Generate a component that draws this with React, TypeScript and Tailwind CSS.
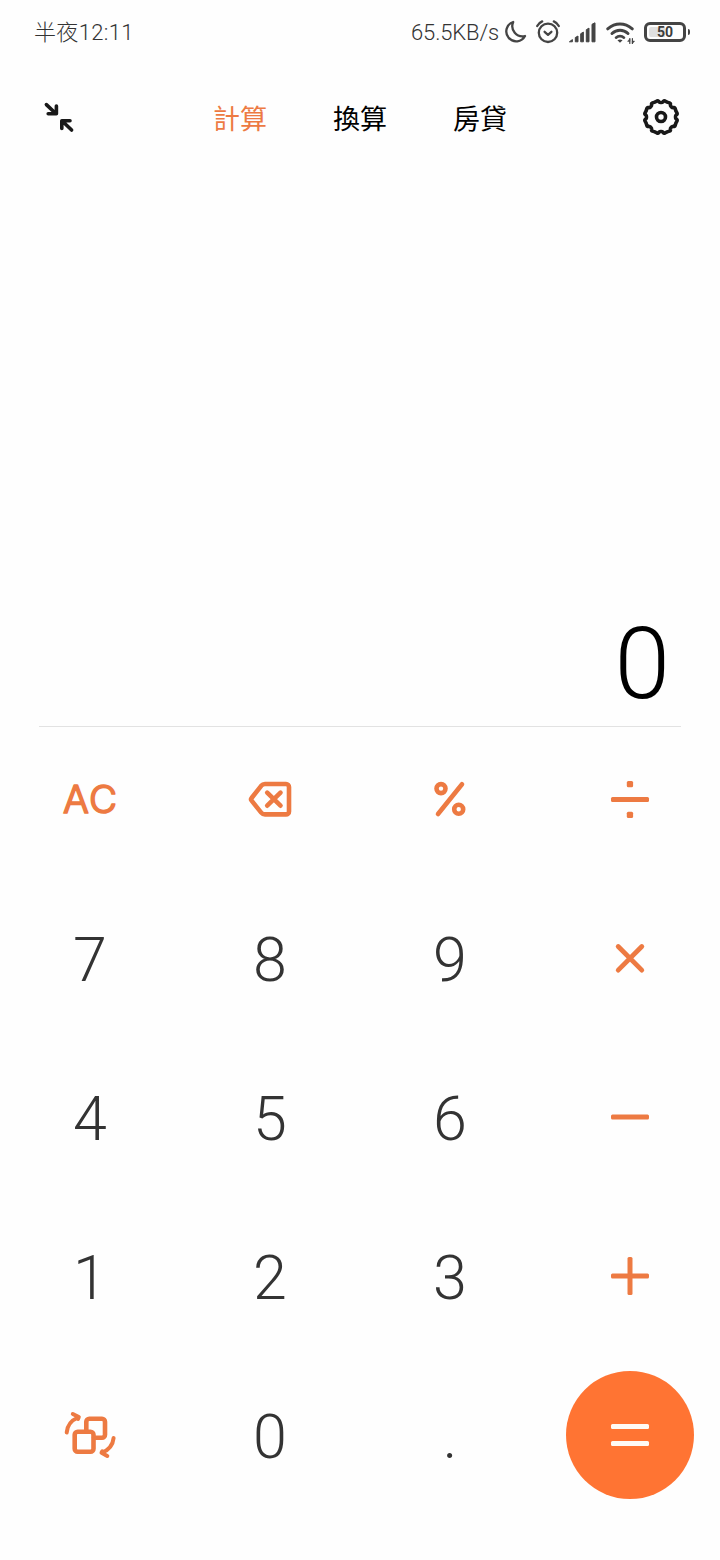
import type { ReactNode } from "react";
import { clsx } from "clsx";

const tabs = ["計算", "換算", "房貸"];

function Moon() {
    return (
        <svg width="24" height="26" viewBox="0 0 24 26" fill="none" stroke="#444" strokeWidth="2.3" strokeLinejoin="round">
            <path d="M9.2 3A9.9 9.9 0 1 0 21 17 10.2 10.2 0 0 1 9.2 3z" />
        </svg>
    );
}

function Alarm() {
    return (
        <svg width="26" height="26" viewBox="0 0 26 26" fill="none" stroke="#444" strokeWidth="2.3" strokeLinecap="round" strokeLinejoin="round">
            <circle cx="13" cy="13.8" r="9.2" />
            <path d="M9.6 12.8l3.4 3 3.4-3" />
            <path d="M2.2 7q1.6-3.2 5-4.6M23.8 7q-1.6-3.2-5-4.6" />
        </svg>
    );
}

function Signal() {
    return (
        <svg width="30" height="26" viewBox="0 0 30 26" fill="#444" stroke="#444" strokeWidth="1" strokeLinejoin="round">
            <path d="M1.4 22.8l3-2.2v2.200zM7.300 18.500l2.700-1.500v5.800H7.300zM12.700 14.700l2.700-1.600v9.700h-2.700zM18.300 10.700l2.700-1.600v13.700h-2.700zM24 5.300l3-1.500v19h-3z" />
        </svg>
    );
}

function Wifi() {
    return (
        <svg width="31" height="26" viewBox="0 0 31 26" fill="none" stroke="#444" strokeWidth="3" strokeLinecap="round">
            <path d="M2.7 9.8Q8.4 5 15 5t12.3 4.8" />
            <path d="M7 14.5q3.5-3.300 8-3.300t8 3.300" />
            <path d="M11 18.700q1.700-1.600 4-1.600t4 1.600" strokeWidth="2.6" />
            <path d="M12.400 21.300l2.600 2.500 2.600-2.500q-2.600-1.800-5.200 0z" fill="#444" stroke="none" />
            <path d="M24.8 19.500v5M27.4 19.500v5" strokeWidth="1.2" />
            <path d="M24.6 20l-2 2.400h2zM27.6 24.500l2-2.400h-2z" fill="#444" strokeWidth="0.5" />
        </svg>
    );
}

function Battery() {
    return (
        <div className="flex w-12 items-center pl-px">
            <div className="flex h-[20px] w-[42px] items-center rounded-[6px] border-3 border-solid border-[#444] p-[2px]">
                <div className="flex h-full w-full items-center justify-center rounded-[2px] bg-linear-to-r from-[#e0e0e0] from-50% to-[#fefefe] to-50% text-[14px] font-bold leading-none text-[#3c3c3c]">
                    50
                </div>
            </div>
            <div className="ml-[2px] h-1.5 w-[2px] rounded-r bg-[#444]" />
        </div>
    );
}

function Collapse() {
    return (
        <svg width="32" height="32" viewBox="0 0 32 32" fill="none" stroke="#191919" strokeWidth="3.6" strokeLinecap="round" strokeLinejoin="round">
            <path d="M3.4 3.6l8.8 8.4M5.200 12.800h8.200V5" />
            <path d="M28.600 29l-8.900-8.500M27 19.700h-8.200v7.800" />
        </svg>
    );
}

// eight broad teeth with a narrow notch between each pair
function gearPath() {
    const at = (r: number, deg: number) => {
        const a = (deg * Math.PI) / 180;
        return `${(20 + r * Math.sin(a)).toFixed(2)} ${(20 - r * Math.cos(a)).toFixed(2)}`;
    };
    let d = `M${at(14.5, 0)}`;
    for (let i = 0; i < 8; i++) {
        const a = i * 45;
        d += `Q${at(14.5, a + 5)} ${at(15.5, a + 8)}`;
        d += `Q${at(16.8, a + 9)} ${at(16.5, a + 14)}`;
        d += `L${at(16.1, a + 22.5)}L${at(16.5, a + 31)}`;
        d += `Q${at(16.8, a + 36)} ${at(15.5, a + 37)}`;
        d += `Q${at(14.5, a + 40)} ${at(14.5, a + 45)}`;
    }
    return d + "z";
}

function Gear() {
    return (
        <svg width="40" height="40" viewBox="0 0 40 40" fill="none" stroke="#191919" strokeWidth="3.6" strokeLinejoin="round">
            <path d={gearPath()} />
            <circle cx="20" cy="20" r="4.5" />
        </svg>
    );
}

function Glyph({ children }: { children: ReactNode }) {
    return (
        <svg
            className="block text-[#ed7a42]"
            width="60"
            height="60"
            viewBox="0 0 60 60"
            fill="none"
            stroke="currentColor"
            strokeWidth="4.6"
            strokeLinecap="round"
            strokeLinejoin="round"
        >
            {children}
        </svg>
    );
}

function Bar({ y = 27.5 }: { y?: number }) {
    return <rect x="11" y={y} width="38" height="5" rx="1.5" fill="currentColor" stroke="none" />;
}

function Key({ label, first, children }: { label?: string; first?: boolean; children?: ReactNode }) {
    return (
        <button className={clsx("flex items-center justify-center", first && "pb-2", children && !first && "pb-0.5")}>
            {children ?? <span className="pt-[3px] text-[61px] font-light leading-none text-[#333]">{label}</span>}
        </button>
    );
}

export default function App() {
    return (
        <div className="flex h-[1560px] w-[720px] flex-col bg-[#fefefe] font-['Roboto','Noto_Sans_CJK_TC',sans-serif]">
            <div className="flex h-16 items-center justify-between pl-[34px] pr-[29px] text-[22px] font-light text-[#333]">
                <span className="pt-px tracking-[0.35px]">半夜12:11</span>
                <div className="flex items-center gap-[7px]">
                    <span className="-mr-0.5 pt-px tracking-[-0.15px]">65.5KB/s</span>
                    <Moon />
                    <Alarm />
                    <Signal />
                    <Wifi />
                    <Battery />
                </div>
            </div>

            <div className="flex h-[106px] items-center justify-between pl-[43px] pr-[39px]">
                <Collapse />
                <div className="flex gap-[66px] pl-1 pt-1.5 text-[27px] leading-none text-black">
                    {tabs.map((tab, i) => (
                        <span key={tab} className={clsx(i === 0 && "text-[#ed7a42]")}>
                            {tab}
                        </span>
                    ))}
                </div>
                <Gear />
            </div>

            <div className="flex flex-1 items-end justify-end pb-3 pr-[50px] text-[100px] font-light leading-none text-black">
                0
            </div>
            <div className="mx-[39px] h-px shrink-0 bg-[#e2e2e2]" />

            <div className="grid grid-cols-4 grid-rows-[152px_159px_159px_159px_159px] pb-[45px]">
                <Key first>
                    <Glyph>
                        <text
                            x="30.7"
                            y="44.4"
                            textAnchor="middle"
                            fontFamily="Inter"
                            fontSize="38.5"
                            fontWeight="300"
                            letterSpacing="1.4"
                            fill="currentColor"
                            strokeWidth="1.7"
                        >
                            AC
                        </text>
                    </Glyph>
                </Key>
                <Key first>
                    <Glyph>
                        <path d="M25 15h21a3 3 0 0 1 3 3v24.4a3 3 0 0 1-3 3H25a5 5 0 0 1-3.8-1.8L11.6 31.6a2 2 0 0 1 0-2.6l9.6-12.2A5 5 0 0 1 25 15z" />
                        <path d="M27.2 23.7l13.3 13M40.5 23.7l-13.3 13" />
                    </Glyph>
                </Key>
                <Key first>
                    <Glyph>
                        <circle cx="21" cy="19.6" r="4.5" />
                        <circle cx="38.7" cy="40.3" r="4.5" />
                        <path d="M42 15.2L18 45" />
                    </Glyph>
                </Key>
                <Key first>
                    <Glyph>
                        <Bar y={28} />
                        <rect x="26.8" y="12" width="6.3" height="6.3" rx="1.5" fill="currentColor" stroke="none" />
                        <rect x="26.8" y="42.7" width="6.3" height="6.3" rx="1.5" fill="currentColor" stroke="none" />
                    </Glyph>
                </Key>

                <Key label="7" />
                <Key label="8" />
                <Key label="9" />
                <Key>
                    <Glyph>
                        <path d="M18.2 18.5L41.8 42.100M41.8 18.5L18.2 42.100" strokeWidth="4.8" />
                    </Glyph>
                </Key>

                <Key label="4" />
                <Key label="5" />
                <Key label="6" />
                <Key>
                    <Glyph>
                        <Bar />
                    </Glyph>
                </Key>

                <Key label="1" />
                <Key label="2" />
                <Key label="3" />
                <Key>
                    <Glyph>
                        <Bar />
                        <rect x="27.5" y="11" width="5" height="38" rx="1.5" fill="currentColor" stroke="none" />
                    </Glyph>
                </Key>

                <Key>
                    <Glyph>
                        <rect x="14.7" y="26.7" width="18.8" height="20" rx="3" />
                        <path d="M26.3 26v-9.3a3 3 0 0 1 3-3H42a3 3 0 0 1 3 3v13a3 3 0 0 1-3 3h-8" />
                        <path d="M6.7 27.5Q7.500 17 18 12.500M12.800 9l6 3-.8 2" strokeWidth="4" />
                        <path d="M53.6 33Q52.500 43.500 42 47.700M47.300 51l-5.800-3.200.8-1.500" strokeWidth="4" />
                    </Glyph>
                </Key>
                <Key label="0" />
                <Key label="." />
                <Key>
                    <div className="flex size-32 flex-col items-center justify-center gap-3 rounded-full bg-[#ff7433]">
                        <div className="h-[5px] w-[38px] rounded-[1.5px] bg-[#fffaf5]" />
                        <div className="h-[5px] w-[38px] rounded-[1.5px] bg-[#fffaf5]" />
                    </div>
                </Key>
            </div>
        </div>
    );
}
